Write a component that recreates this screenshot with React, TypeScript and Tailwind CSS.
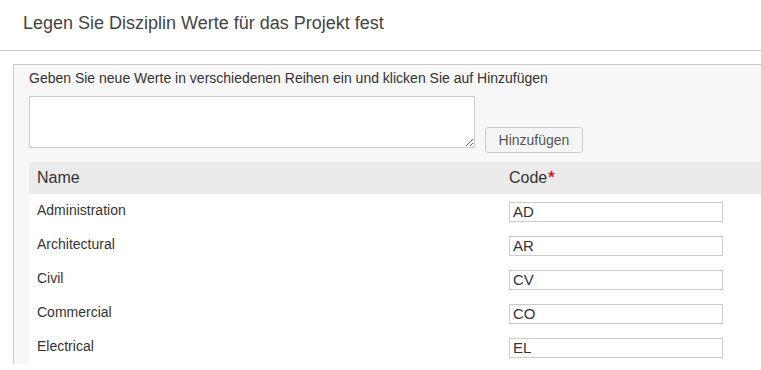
const ROWS = [
  { name: "Administration", code: "AD" },
  { name: "Architectural", code: "AR" },
  { name: "Civil", code: "CV" },
  { name: "Commercial", code: "CO" },
  { name: "Electrical", code: "EL" },
];

export default function App() {
  return (
    <div className="h-[370px] w-[761px] overflow-hidden bg-white font-['Liberation_Sans',Arial,sans-serif] text-[#333]">
      <header className="h-[51px] border-b border-[#ccc] pl-[23px] pt-[11px]">
        <h1 className="text-[18px] leading-[24px] text-[#444]">
          Legen Sie Disziplin Werte für das Projekt fest
        </h1>
      </header>

      <section className="ml-[13px] mt-[13px] border-l border-t border-[#ccc] bg-[#f7f7f7] pl-[15px]">
        <p className="pt-[4px] text-[14px] leading-[19px]">
          Geben Sie neue Werte in verschiedenen Reihen ein und klicken Sie auf Hinzufügen
        </p>
        <div className="mt-[8px] flex items-end gap-[10px]">
          <textarea className="h-[52px] w-[446px] resize-y border border-[#ccc] bg-white p-1 text-[13px] outline-none" />
          <button className="-mb-[5px] h-[26px] w-[98px] rounded-[3px] border border-[#ccc] bg-[#f5f5f5] text-[14px] text-[#555]">
            Hinzufügen
          </button>
        </div>

        <table className="mt-[14px] w-full border-collapse bg-white">
          <thead>
            <tr className="h-[32px] bg-[#ebebeb] text-left text-[16px] font-normal">
              <th className="w-[480px] pl-[8px] font-normal">Name</th>
              <th className="font-normal">
                Code<span className="ml-[1px] font-bold text-[#e0142a]">*</span>
              </th>
            </tr>
          </thead>
          <tbody>
            {ROWS.map((row) => (
              <tr key={row.code} className="h-[34px] align-top text-[14px]">
                <td className="pl-[8px] pt-[6px]">{row.name}</td>
                <td className="pt-[8px]">
                  <input
                    readOnly
                    value={row.code}
                    className="h-[20px] w-[214px] border border-[#ccc] px-[3px] text-[15px] text-[#333] outline-none"
                  />
                </td>
              </tr>
            ))}
          </tbody>
        </table>
      </section>
    </div>
  );
}
